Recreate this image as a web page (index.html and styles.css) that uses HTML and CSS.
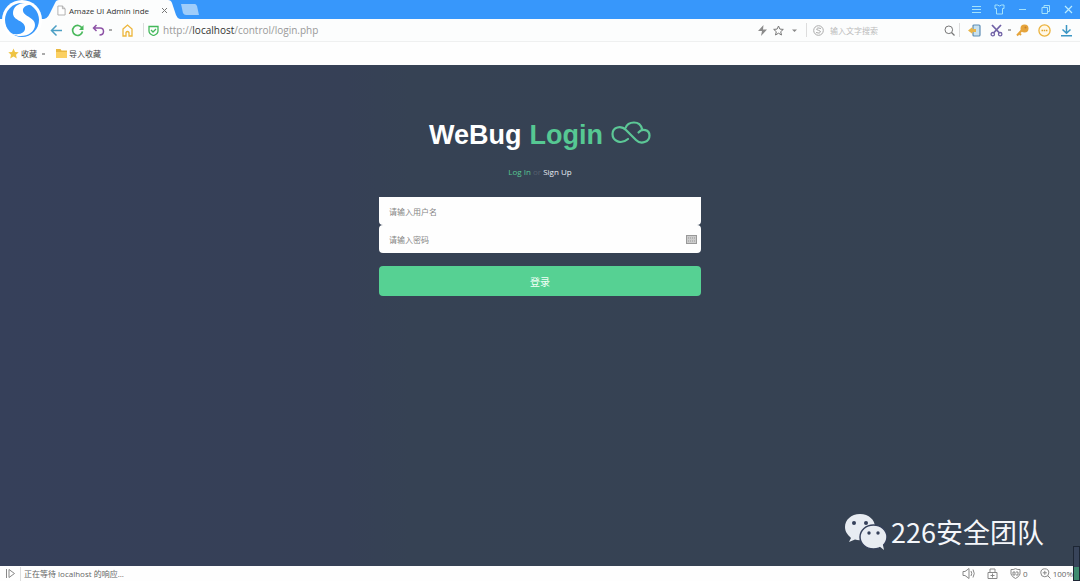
FILE: index.html
```html
<!DOCTYPE html>
<html lang="zh-CN">
<head>
<meta charset="utf-8">
<meta name="viewport" content="width=device-width, initial-scale=1">
<title>Amaze UI Admin index</title>
<link rel="stylesheet" href="styles.css">
</head>
<body>
<div class="browser">
  <svg class="logo" viewBox="0 0 40 40" aria-hidden="true">
    <circle cx="20" cy="20" r="20" fill="#fff"/>
    <circle cx="20" cy="20" r="17" fill="#3797fb"/>
    <path d="M31 5C21 0 11 5 11 13C11 21 22 20 23 27C24 33 17 36 8 33C20 40 33 34 33 25C33 17 22 17 21 11C20 7 26 4 31 5Z" fill="#fff"/>
  </svg>
  <header class="titlebar">
    <div class="tab">
      <svg class="tab-shape" viewBox="0 0 136 19" preserveAspectRatio="none" aria-hidden="true"><path d="M0 19C4 18 5 15 7 11L11 3Q12 0 15 0H124Q127 0 128 3L132 15Q133 18 136 19Z" fill="#fcfdfd"/></svg>
      <svg class="i9" viewBox="0 0 10 12"><path d="M1 1H6L9 4V11H1ZM6 1V4H9" fill="#fff" stroke="#aaa"/></svg>
      <span class="tab-title">Amaze UI Admin inde</span>
      <button class="tab-close" aria-label="关闭标签"><svg class="i7" viewBox="0 0 7 7"><path d="M1 1L6 6M6 1L1 6" stroke="#777"/></svg></button>
    </div>
    <button class="new-tab" aria-label="新标签"><svg viewBox="0 0 20 13"><path d="M1 1H15Q16 1 17 3L19 12H6Q4 12 3 10Z" fill="#9fcdfa"/></svg></button>
    <div class="window-buttons">
      <button aria-label="菜单"><svg class="i11" viewBox="0 0 11 11"><path d="M1 2.5H10M1 5.5H10M1 8.5H10" stroke="#a4e2fb"/></svg></button>
      <button aria-label="皮肤"><svg class="i11" viewBox="0 0 11 11"><path d="M1 1H3.5Q5.500 3 7.500 1H10V4.500H8.500V10H2.500V4.500H1Z" stroke="#a4e2fb" fill="none"/></svg></button>
      <button aria-label="最小化"><svg class="i11" viewBox="0 0 11 11"><path d="M2 5.500H9" stroke="#a4e2fb"/></svg></button>
      <button aria-label="还原"><svg class="i11" viewBox="0 0 11 11"><path d="M2 3.500H7.500V9.500H2ZM4 3V1.500H9.500V7.500H8" stroke="#a4e2fb" fill="none"/></svg></button>
      <button aria-label="关闭"><svg class="i11" viewBox="0 0 11 11"><path d="M2 2L9 9M9 2L2 9" stroke="#b9ecff" stroke-width="1.200"/></svg></button>
    </div>
  </header>

  <nav class="toolbar">
    <div class="nav-buttons">
      <button aria-label="后退"><svg class="i13" viewBox="0 0 13 13"><path d="M12 6.500H1.500M6.500 1.500L1.500 6.500L6.500 11.500" stroke="#4b9fc4" stroke-width="1.500" fill="none"/></svg></button>
      <button aria-label="刷新"><svg class="i13" viewBox="0 0 13 13"><path d="M11 4A5 5 0 1 0 11.500 7.500" stroke="#48b85b" stroke-width="1.600" fill="none"/><path d="M12.500 1V6H8Z" fill="#48b85b"/></svg></button>
      <button aria-label="撤销"><svg class="i13" viewBox="0 0 13 13"><path d="M4.500 1L1.500 4L4.500 7M1.500 4H8Q11.500 4 11.500 7.500Q11.500 11 7.500 11" stroke="#8d52a6" stroke-width="1.500" fill="none"/></svg></button>
    </div>
    <span class="dot"></span>
    <button class="home" aria-label="主页"><svg class="i13" viewBox="0 0 13 13"><path d="M2 5L6.500 1L11 5V12H8V8.500Q6.500 6.500 5 8.500V12H2Z" stroke="#edb63b" stroke-width="1.300" fill="none"/></svg></button>
    <span class="separator"></span>
    <svg class="i11 shield" viewBox="0 0 11 11"><path d="M1 1.500H10V6Q10 9 5.500 10.500Q1 9 1 6Z" fill="none" stroke="#42b85a" stroke-width="1.300"/><path d="M3 5L5 7L8 4" stroke="#42b85a" stroke-width="1.300" fill="none"/></svg>
    <div class="address" role="textbox" contenteditable="true" aria-label="地址" spellcheck="false">http://<b>localhost</b>/control/login.php</div>
    <div class="address-tools">
      <button aria-label="极速模式"><svg class="i11" viewBox="0 0 11 11"><path d="M6.500 0L1 6H5L4 11L10 4.500H6Z" fill="#8b8b8b"/></svg></button>
      <button aria-label="收藏此页"><svg class="i11" viewBox="0 0 11 11"><path d="M5.500 1L6.900 4.100L10.300 4.400L7.700 6.700L8.500 10L5.500 8.200L2.500 10L3.300 6.700L.7 4.400L4.100 4.100Z" stroke="#777" fill="none"/></svg></button>
      <button aria-label="更多地址"><svg class="i11" viewBox="0 0 11 11"><path d="M3 4.500H8L5.500 7Z" fill="#888"/></svg></button>
    </div>
    <form class="search">
      <svg class="i11" viewBox="0 0 11 11"><circle cx="5.500" cy="5.500" r="4.800" stroke="#aaa" fill="none"/><path d="M8 3.500Q4 2 3.500 4C3.500 5.500 7.500 5 7.500 7Q7 9 3 7.500" stroke="#aaa" fill="none"/></svg>
      <input class="search-input" aria-label="搜索" placeholder="输入文字搜索">
      <button aria-label="搜索"><svg class="i11" viewBox="0 0 11 11"><circle cx="4.800" cy="4.800" r="3.800" stroke="#777" fill="none"/><path d="M7.500 7.500L10.500 10.500" stroke="#777" stroke-width="1.200"/></svg></button>
    </form>
    <div class="extensions">
      <button aria-label="手机"><svg class="i13" viewBox="0 0 13 13"><rect x="5" y="1" width="7" height="11" rx="1" fill="#c9e2ef" stroke="#5e8db5" stroke-width="1.200"/><path d="M0 6.500L4.500 3V5H8V8H4.500V10Z" fill="#e8b54a"/></svg></button>
      <button aria-label="截图"><svg class="i13" viewBox="0 0 13 13"><path d="M2 1L9.500 9M11 1L3.500 9" stroke="#7162a6" stroke-width="1.800"/><circle cx="2.800" cy="10.200" r="1.700" stroke="#7162a6" stroke-width="1.300" fill="none"/><circle cx="10.200" cy="10.200" r="1.700" stroke="#7162a6" stroke-width="1.300" fill="none"/></svg></button>
      <span class="dot"></span>
      <button aria-label="密码"><svg class="i13" viewBox="0 0 13 13"><circle cx="8.500" cy="4.500" r="4" fill="#e5a43c"/><path d="M6 6L1 11.500M3 9L5 11" stroke="#e5a43c" stroke-width="2"/><circle cx="9.500" cy="3.500" r="1" fill="#c9802a"/></svg></button>
      <button aria-label="更多"><svg class="i13" viewBox="0 0 13 13"><circle cx="6.500" cy="6.500" r="5.600" fill="#fff8e7" stroke="#ebb23c" stroke-width="1.300"/><path d="M3.500 6.500H9.500" stroke="#e0a32c" stroke-width="1.500" stroke-dasharray="1.500 .7"/></svg></button>
      <button aria-label="下载"><svg class="i13" viewBox="0 0 13 13"><path d="M6.500 1V9M2.500 5.500L6.500 9.300L10.500 5.500M1 11.700H12" stroke="#3b96c4" stroke-width="1.500" fill="none"/></svg></button>
    </div>
  </nav>

  <nav class="bookmarks">
    <button class="bookmark"><svg class="i11" viewBox="0 0 11 11"><path d="M5.500 .5L7 4L10.700 4.300L8 6.800L8.800 10.500L5.500 8.500L2.200 10.500L3 6.800L.3 4.300L4 4Z" fill="#efc443"/></svg>收藏</button>
    <span class="dot"></span>
    <button class="bookmark folder"><svg class="i11" viewBox="0 0 11 11"><path d="M0 1H4.500L5.500 2.500H11V10H0Z" fill="#e9b840"/><path d="M0 4H11V10H0Z" fill="#fbd062"/></svg>导入收藏</button>
  </nav>

  <main class="page">
    <h1 class="brand">WeBug <span class="accent">Login</span>
      <svg class="cloud" viewBox="0 0 40 24" aria-hidden="true"><path d="M17 18C10 24 1.500 20 1.500 13C1.500 6 10 4 15 9L25 19C30 24 38.500 21 38.500 14.500C38.500 8.500 31 7 27.500 11.500M14.500 7C17 0 29 -1 31 8" fill="none" stroke="#5cc796" stroke-width="2.200" stroke-linecap="round"/></svg>
    </h1>
    <p class="switch"><a class="accent" href="#login">Log In</a> <span class="or">or</span> <a href="#signup">Sign Up</a></p>
    <form class="login">
      <input class="field" type="text" aria-label="用户名" placeholder="请输入用户名">
      <div class="password">
        <input class="field" type="password" aria-label="密码" placeholder="请输入密码">
        <button class="keyboard" type="button" aria-label="软键盘"><svg class="i11" viewBox="0 0 11 9"><rect x=".5" y=".5" width="10" height="8" fill="#ccc" stroke="#999"/><path d="M2 3H9M2 6H9" stroke="#999" stroke-dasharray="1 1"/></svg></button>
      </div>
      <button class="submit" type="submit">登录</button>
    </form>
    <div class="watermark">
      <svg viewBox="0 0 42 36" aria-hidden="true"><path d="M15 0C6 0 0 6 0 13C0 18 3 21 6 24L4 28L10 25.500Q13 26.500 17 26C26 25 30 19 30 13C30 6 24 0 15 0Z" fill="#e8ecf2"/><ellipse cx="28.500" cy="23" rx="13.500" ry="12" fill="#e8ecf2" stroke="#35405a" stroke-width="1.500"/><path d="M34 32L39 36L37.500 29Z" fill="#e8ecf2"/><g fill="#35405a"><circle cx="9" cy="9" r="2"/><circle cx="21" cy="9" r="2"/><circle cx="24" cy="19" r="1.700"/><circle cx="33" cy="19" r="1.700"/></g></svg>
      <span>226安全团队</span>
    </div>
  </main>

  <footer class="status">
    <button aria-label="侧边栏"><svg class="i11" viewBox="0 0 11 11"><path d="M1.500 1V10M4 1.500L9.500 5.500L4 9.500Z" stroke="#888" fill="none"/></svg></button>
    <span class="separator"></span>
    <span class="message">正在等待 localhost 的响应...</span>
    <button aria-label="声音"><svg class="i13" viewBox="0 0 13 13"><path d="M1 4.500H3L7 1.500V11.500L3 8.500H1ZM9 4Q10.500 6.500 9 9M11 2.500Q13.500 6.500 11 10.500" stroke="#888" fill="none"/></svg></button>
    <button aria-label="安全"><svg class="i11" viewBox="0 0 11 11"><path d="M1 4.500H10V10.500H1ZM3 4V1H8V4M3.500 7.500H7.500M5.500 5.500V9.500" stroke="#888" fill="none"/></svg></button>
    <button class="stat"><svg class="i11" viewBox="0 0 11 11"><path d="M5.500 .7Q8 2 10 1.500V6Q9 9 5.500 10.500Q2 9 1 6V1.500Q3 2 5.500 .7ZM3 4V7H5V4ZM6 4H8V7H6" stroke="#888" fill="none"/></svg>0</button>
    <button class="stat zoom"><svg class="i11" viewBox="0 0 11 11"><circle cx="4.800" cy="4.800" r="4" stroke="#888" fill="none"/><path d="M7.800 7.800L10.500 10.500M2.800 4.800H6.800M4.800 2.800V6.800" stroke="#888"/></svg>100%</button>
  </footer>
  <div class="meter" aria-hidden="true"></div>
</div>
</body>
</html>
```
FILE: styles.css
```css
* { box-sizing: border-box; }
body {
  margin: 0;
  font-family: "Open Sans", "Noto Sans CJK SC", sans-serif;
  font-size: 8px;
  color: #555;
}
button, input { font: inherit; color: inherit; border: 0; padding: 0; background: none; }
button { display: flex; align-items: center; flex: none; }
svg { display: block; flex: none; }
a { color: inherit; text-decoration: none; }
.i7 { width: 7px; height: 7px; }
.i9 { width: 9px; height: 11px; }
.i11 { width: 11px; height: 11px; }
.i13 { width: 13px; height: 13px; }

.browser { position: relative; display: flex; flex-direction: column; min-height: 100vh; }
.logo { position: absolute; left: 2px; top: 0; width: 40px; height: 40px; z-index: 2; }

.titlebar { display: flex; align-items: center; height: 19px; padding-left: 44px; background: #3797fb; }
.tab { position: relative; display: flex; align-items: center; width: 136px; height: 19px; padding: 2px 12px 0 13px; }
.tab-shape { position: absolute; inset: 0; width: 100%; height: 100%; }
.tab > :not(.tab-shape) { position: relative; }
.tab-title { flex: 1; margin-left: 3px; white-space: nowrap; font-size: 8px; line-height: 12px; color: #333; }
.new-tab svg { width: 20px; height: 13px; }
.window-buttons { display: flex; gap: 12px; margin-left: auto; padding-right: 6px; }

.toolbar { display: flex; align-items: center; height: 23px; padding: 0 7px 0 50px; background: #fcfdfd; border-bottom: 1px solid #eff0f0; }
.nav-buttons { display: flex; gap: 8px; }
.dot { flex: none; width: 3px; height: 2px; margin: 0 4px; background: #aaa; }
.home { margin-left: 5px; }
.separator { flex: none; width: 1px; height: 14px; background: #ddd; }
.toolbar > .separator { margin-left: 9px; }
.shield { margin: 0 4px; }
.address { flex: 1; font-size: 10px; line-height: 14px; white-space: nowrap; color: #999; outline: 0; }
.address b { font-weight: 400; color: #333; }
.address-tools { display: flex; gap: 5px; padding-right: 6px; }
.search { display: flex; align-items: center; gap: 6px; width: 154px; height: 14px; padding: 0 4px 0 6px; border: solid #ddd; border-width: 0 1px; }
.search-input { flex: 1; min-width: 0; outline: 0; }
.search-input::placeholder { color: #bbb; opacity: 1; }
.extensions { display: flex; align-items: center; gap: 9px; padding-left: 8px; }
.extensions .dot { margin: 0 -4px; }

.bookmarks { display: flex; align-items: center; height: 23px; padding-left: 8px; background: #fefefe; }
.bookmark { gap: 2px; color: #444; }
.bookmarks .dot { margin: 0 11px 0 5px; }

.page {
  position: relative; flex: 1; display: flex; flex-direction: column; align-items: center; padding: 54px 20px 80px;
  background: linear-gradient(90deg, #36405a 0%, #364056 32%, #364254 38%, #364252 100%);
}
.brand {
  display: flex; align-items: center; gap: 8px; margin: 0; color: #fff;
  font: bold 27px/32px "Liberation Sans", sans-serif;
}
.cloud { margin-bottom: 4px; }
.accent { color: #56c893; }
.cloud { width: 40px; height: 24px; }
.switch { margin: 15px 0 19px; line-height: 12px; font-size: 8px; color: #e8ecf2; }
.or { color: #56606f; }
.login { width: 100%; max-width: 322px; }
.field { display: block; width: 100%; height: 28px; padding: 0 10px; background: #fefefe; border-radius: 0 0 4px 4px; outline: 0; }
.field::placeholder { color: #858585; opacity: 1; }
.password { position: relative; }
.password .field { border-radius: 4px; padding-right: 24px; }
.keyboard { position: absolute; right: 4px; top: 9px; }
.submit { justify-content: center; width: 100%; height: 30px; margin-top: 13px; border-radius: 4px; background: #56d193; color: #f2fff7; font-size: 10px; }
.watermark {
  position: absolute; right: 36px; bottom: 14px; display: flex; align-items: center; gap: 4px; color: #f4f6fa;
  font: 27px/40px "Noto Sans CJK SC", sans-serif;
}
.watermark svg { width: 42px; height: 36px; }

.status { display: flex; align-items: center; height: 15px; padding: 0 7px 0 5px; background: #fefefe; color: #666; }
.status .separator { margin: 0 3px 0 4px; }
.message { flex: 1; }
.status button { margin-left: 12px; }
.status button:first-child { margin-left: 0; }
.status .stat { gap: 2px; }
.meter { position: absolute; right: 0; bottom: 0; width: 7px; height: 35px; border: 1px solid #1d2634; background: linear-gradient(#38445a 60%, #3f8b70 60%); }
```
